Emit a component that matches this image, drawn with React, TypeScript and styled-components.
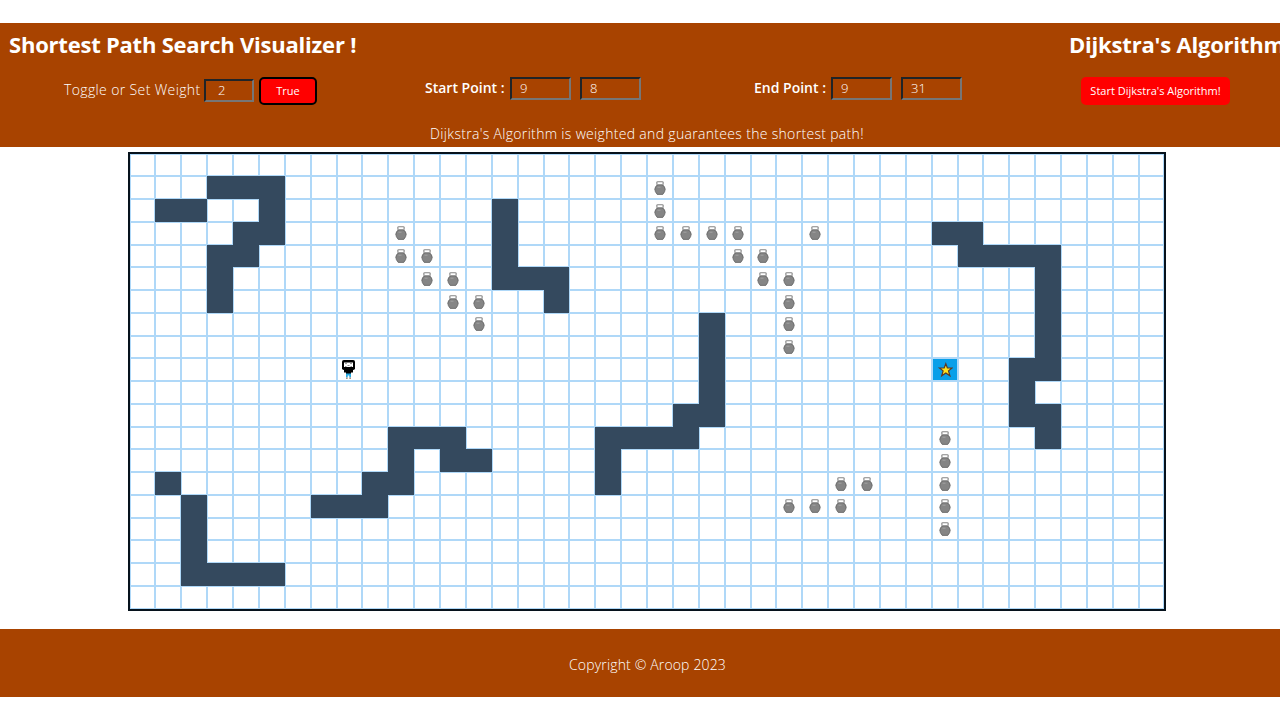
import React from "react";
import styled, { createGlobalStyle, css } from "styled-components";

const Global = createGlobalStyle`
  * { box-sizing: border-box; }
  html, body { margin: 0; background: #fff; overflow: hidden; }
  body { font-family: "Open Sans", "Noto Sans", sans-serif; color: #fff; }
`;

const Page = styled.div`
  width: 1280px;
  height: 720px;
  padding-top: 23px;
  overflow: hidden;
`;

const Header = styled.header`
  height: 124px;
  background: #a84300;
  overflow: hidden;
`;

const TitleRow = styled.div`
  display: flex;
  height: 44px;
  padding-left: 9px;
`;

const Title = styled.h1<{ $width: number; $spacing: number }>`
  flex: 0 0 ${(p) => p.$width}px;
  margin: 0;
  font-size: 22px;
  line-height: 42px;
  font-weight: 700;
  letter-spacing: ${(p) => p.$spacing}px;
  white-space: nowrap;
`;

const Controls = styled.div`
  display: grid;
  grid-template-columns: 361px 329px 327px 1fr;
  height: 53px;
  padding: 10px 0 0 64px;
`;

const Group = styled.div<{ $top?: number }>`
  display: flex;
  align-items: flex-start;
  padding-top: ${(p) => p.$top ?? 0}px;
`;

const Label = styled.label<{ $bold?: boolean; $width: number; $spacing?: number }>`
  flex: 0 0 ${(p) => p.$width}px;
  font-size: 14px;
  line-height: 22px;
  font-weight: ${(p) => (p.$bold ? 600 : 300)};
  letter-spacing: ${(p) => p.$spacing ?? 0}px;
  white-space: nowrap;
`;

const Field = styled.input<{ $width: number; $pad: number; $gap?: number }>`
  width: ${(p) => p.$width}px;
  height: 23px;
  margin: 0 ${(p) => p.$gap ?? 0}px 0 0;
  padding: 0 0 1px ${(p) => p.$pad}px;
  border: 2px solid;
  border-color: #202428 #767676 #767676 #202428;
  border-radius: 0;
  background: transparent;
  color: #fff;
  font: 300 13px/18px "Open Sans", sans-serif;
  outline: none;
`;

const Button = styled.button<{ $outlined?: boolean; $width: number }>`
  width: ${(p) => p.$width}px;
  height: 28px;
  padding: 0 0 1px;
  border: ${(p) => (p.$outlined ? "2px solid #000" : "0")};
  border-radius: 5px;
  background: #f00;
  color: #fff;
  font: 400 11px "Open Sans", sans-serif;
  white-space: nowrap;
`;

const Message = styled.p`
  margin: 0;
  padding-left: 14px;
  text-align: center;
  font-size: 14px;
  line-height: 27px;
  font-weight: 300;
  letter-spacing: 0.32px;
`;

const Board = styled.main`
  display: grid;
  grid-template-columns: 25.4px repeat(38, 25.875px) 1fr;
  grid-template-rows: 22.4px repeat(18, 22.75px) 1fr;
  width: 1038px;
  height: 459px;
  margin: 5px 0 0 128px;
  border: 2px solid #06121c;
`;

type Kind = "open" | "wall" | "weight" | "start" | "end";

const Cell = styled.div<{ $kind: Kind }>`
  display: flex;
  align-items: center;
  justify-content: center;
  min-width: 0;
  min-height: 0;
  border: 1px solid #afd8f8;
  ${(p) => p.$kind === "wall" && css`background: #34495e; border-color: #34495e;`}
  ${(p) => p.$kind === "end" && css`background: #089fe9;`}
`;

const Footer = styled.footer`
  height: 68px;
  margin-top: 18px;
  padding-left: 15px;
  background: #a84300;
  text-align: center;
  font-size: 14px;
  line-height: 71px;
  font-weight: 300;
  letter-spacing: 0.15px;
`;

const walls: Record<number, number[]> = {
  1: [3, 4, 5],
  2: [1, 2, 5, 14],
  3: [4, 5, 14, 31, 32],
  4: [3, 4, 14, 32, 33, 34, 35],
  5: [3, 14, 15, 16, 35],
  6: [3, 16, 35],
  7: [22, 35],
  8: [22, 35],
  9: [22, 34, 35],
  10: [22, 34],
  11: [21, 22, 34, 35],
  12: [10, 11, 12, 18, 19, 20, 21, 35],
  13: [10, 12, 13, 18],
  14: [1, 9, 10, 18],
  15: [2, 7, 8, 9],
  16: [2],
  17: [2],
  18: [2, 3, 4, 5],
};

const weights: Record<number, number[]> = {
  1: [20],
  2: [20],
  3: [10, 20, 21, 22, 23, 26],
  4: [10, 11, 23, 24],
  5: [11, 12, 24, 25],
  6: [12, 13, 25],
  7: [13, 25],
  8: [25],
  12: [31],
  13: [31],
  14: [27, 28, 31],
  15: [25, 26, 27, 31],
  16: [31],
};

const start = { row: 9, col: 8 };
const end = { row: 9, col: 31 };

function kindOf(row: number, col: number): Kind {
  if (row === start.row && col === start.col) return "start";
  if (row === end.row && col === end.col) return "end";
  if (walls[row]?.includes(col)) return "wall";
  if (weights[row]?.includes(col)) return "weight";
  return "open";
}

const WeightIcon = () => (
  <svg width="12" height="14" viewBox="0 0 12 14">
    <path d="M3.200 5 2.800 1.600Q2.800.7 3.900.7h4.200q1.100 0 1.100.9L8.800 5" fill="#fff" stroke="#858585" strokeWidth="1.100" />
    <path d="M4 3.800h4Q11 5 11.200 8.200 11.200 10.500 8.800 13.400H3.200Q.8 10.500.8 8.200 1 5 4 3.800z" fill="#858585" stroke="#626262" strokeWidth=".8" />
    <path d="M3.500 6.200h3" stroke="#a2a2a2" />
  </svg>
);

const PersonIcon = () => (
  <svg width="14" height="20" viewBox="0 0 14 20">
    <rect x="0" y="0" width="13" height="10" rx="1.800" fill="#000" />
    <path d="M2 2.500h9v4.500H2z" fill="#fff" />
    <path d="M3 3.600h2M8 3.600h2M3 6.500h1.500M5.500 5.500h2M8.500 6.500H10" stroke="#777" strokeWidth=".8" />
    <path d="M4 9h5l2 1v2.600H9V14H4v-1.400H2V10z" fill="#000" />
    <path d="M4 13.600h5v4H7.300v-2H5.700v2H4z" fill="#27a8e0" />
    <path d="M4 17.500h1.700V19H4zM7.300 17.500H9V19H7.300z" fill="#a89488" />
  </svg>
);

const StarIcon = () => (
  <svg width="16" height="16" viewBox="0 0 16 16">
    <path
      d="m8.800 1.800 1.600 4.200h4.700l-3.600 2.900 1.400 4.800-4.100-2.800-4.100 2.800 1.400-4.800L2.500 6h4.700z"
      fill="#ffe21d"
      stroke="#5a3826"
      strokeWidth="1.200"
    />
  </svg>
);

const cells = Array.from({ length: 800 }, (_, i) => kindOf(Math.floor(i / 40), i % 40));

export default function App() {
  return (
    <Page>
      <Global />
      <Header>
        <TitleRow>
          <Title $width={1060} $spacing={-0.22}>Shortest Path Search Visualizer !</Title>
          <Title $width={230} $spacing={-0.2}>Dijkstra's Algorithm</Title>
        </TitleRow>
        <Controls>
          <Group>
            <Group $top={2}>
              <Label $width={140} $spacing={0.37}>Toggle or Set Weight</Label>
              <Field $width={50} $pad={12} $gap={5} defaultValue="2" />
            </Group>
            <Button $outlined $width={58}>True</Button>
          </Group>
          <Group>
            <Label $bold $width={85}>Start Point :</Label>
            <Field $width={61} $pad={8} $gap={9} defaultValue="9" />
            <Field $width={61} $pad={8} defaultValue="8" />
          </Group>
          <Group>
            <Label $bold $width={77}>End Point :</Label>
            <Field $width={61} $pad={8} $gap={9} defaultValue="9" />
            <Field $width={61} $pad={8} defaultValue="31" />
          </Group>
          <Group>
            <Button $width={149}>Start Dijkstra's Algorithm!</Button>
          </Group>
        </Controls>
        <Message>Dijkstra's Algorithm is weighted and guarantees the shortest path!</Message>
      </Header>
      <Board>
        {cells.map((kind, i) => (
          <Cell key={i} $kind={kind}>
            {kind === "weight" && <WeightIcon />}
            {kind === "start" && <PersonIcon />}
            {kind === "end" && <StarIcon />}
          </Cell>
        ))}
      </Board>
      <Footer>Copyright © Aroop 2023</Footer>
    </Page>
  );
}
